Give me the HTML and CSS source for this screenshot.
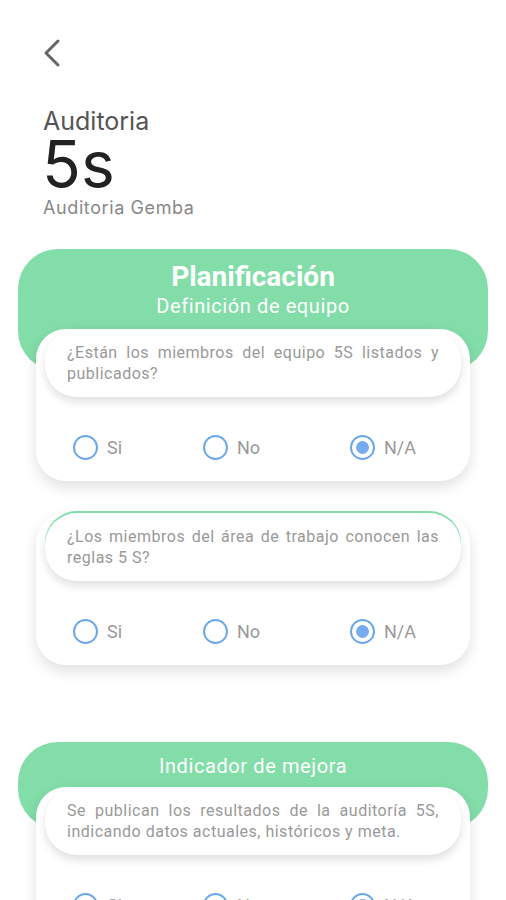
FILE: index.html
```html
<!DOCTYPE html>
<html>
    <head>
        <title>Auditoria 5s</title>
        <link rel="stylesheet" href="styles.css">
    </head>
    <body>
        <header class="top">
            <a class="back" href="#">
                <svg width="20" height="30" viewBox="0 0 20 30">
                    <path d="M17 3 L5 15 L17 27" fill="none" stroke="#666" stroke-width="3" stroke-linecap="round" stroke-linejoin="round" />
                </svg>
            </a>
            <div class="kicker">Auditoria</div>
            <h1>5s</h1>
            <div class="subtitle">Auditoria Gemba</div>
        </header>

        <section class="group">
            <div class="group_head tall">
                <h2>Planificación</h2>
                <h3>Definición de equipo</h3>
            </div>
            <div class="card">
                <p class="question">¿Están los miembros del equipo 5S listados y publicados?</p>
                <div class="options">
                    <label class="opt"><span class="radio"></span>Si</label>
                    <label class="opt"><span class="radio"></span>No</label>
                    <label class="opt"><span class="radio on"></span>N/A</label>
                </div>
            </div>
            <div class="card second">
                <p class="question edge">¿Los miembros del área de trabajo conocen las reglas 5 S?</p>
                <div class="options">
                    <label class="opt"><span class="radio"></span>Si</label>
                    <label class="opt"><span class="radio"></span>No</label>
                    <label class="opt"><span class="radio on"></span>N/A</label>
                </div>
            </div>
        </section>

        <section class="group">
            <div class="group_head">
                <h3>Indicador de mejora</h3>
            </div>
            <div class="card">
                <p class="question">Se publican los resultados de la auditoría 5S, indicando datos actuales, históricos y meta.</p>
                <div class="options">
                    <label class="opt"><span class="radio"></span>Si</label>
                    <label class="opt"><span class="radio"></span>No</label>
                    <label class="opt"><span class="radio on"></span>N/A</label>
                </div>
            </div>
        </section>
    </body>
</html>
```

FILE: styles.css
```css
*{
    box-sizing: border-box;
}
html{
    background: #FFF;
}
body{
    margin: 0;
    padding: 0;
    font-family: 'Roboto', 'Liberation Sans', sans-serif;
    overflow: hidden;
    height: 900px;
}
.top{
    padding: 38px 0 0 43px;
}
.back{
    display: block;
    width: 20px;
    height: 30px;
    margin-left: -2px;
}
.kicker{
    margin-top: 40px;
    font-family: 'Inter', sans-serif;
    font-size: 25px;
    line-height: 26px;
    color: #555;
}
h1{
    margin: 0 0 0 -1px;
    font-family: 'Inter', sans-serif;
    font-weight: 400;
    font-size: 64px;
    line-height: 60px;
    color: #222;
}
.subtitle{
    margin-top: 3px;
    font-family: 'Inter', sans-serif;
    font-size: 18px;
    line-height: 22px;
    letter-spacing: 0.6px;
    color: #888;
}
.group{
    margin: 30px 18px 0;
}
.group + .group{
    margin-top: 77px;
}
.group_head{
    background: #82DDA9;
    border-radius: 40px;
    height: 87px;
    padding-top: 11px;
    text-align: center;
    color: #FFF;
}
.group_head.tall{
    height: 122px;
    padding-top: 11px;
}
h2{
    margin: 0;
    font-size: 28px;
    line-height: 33px;
    font-weight: 700;
}
h3{
    margin: 0;
    font-size: 20px;
    line-height: 26px;
    letter-spacing: 0.6px;
    font-weight: 400;
}
.card{
    position: relative;
    margin: -42px 18px 0;
    padding: 0 9px 9px;
    background: #FFF;
    border-radius: 30px;
    box-shadow: 0 6px 14px rgba(0, 0, 0, 0.12);
}
.card.second{
    margin-top: 32px;
}
.question{
    margin: 0;
    padding: 13px 22px;
    min-height: 68px;
    background: #FFF;
    border-radius: 32px;
    box-shadow: 0 5px 9px rgba(0, 0, 0, 0.12);
    font-size: 16px;
    line-height: 21px;
    letter-spacing: 0.5px;
    color: #999;
    text-align: justify;
}
.question.edge{
    box-shadow: 0 -2px 0 #82DDA9, 0 5px 9px rgba(0, 0, 0, 0.12);
}
.options{
    display: grid;
    grid-template-columns: 130px 147px auto;
    align-items: center;
    height: 50px;
    margin-top: 25px;
    padding-left: 28px;
}
.opt{
    display: flex;
    align-items: center;
    font-size: 18px;
    color: #999;
}
.radio{
    width: 25px;
    height: 25px;
    margin-right: 9px;
    border: 2px solid #6BA7EC;
    border-radius: 50%;
    display: flex;
    align-items: center;
    justify-content: center;
}
.radio.on::after{
    content: "";
    width: 13px;
    height: 13px;
    border-radius: 50%;
    background: #76ACEE;
}
```
